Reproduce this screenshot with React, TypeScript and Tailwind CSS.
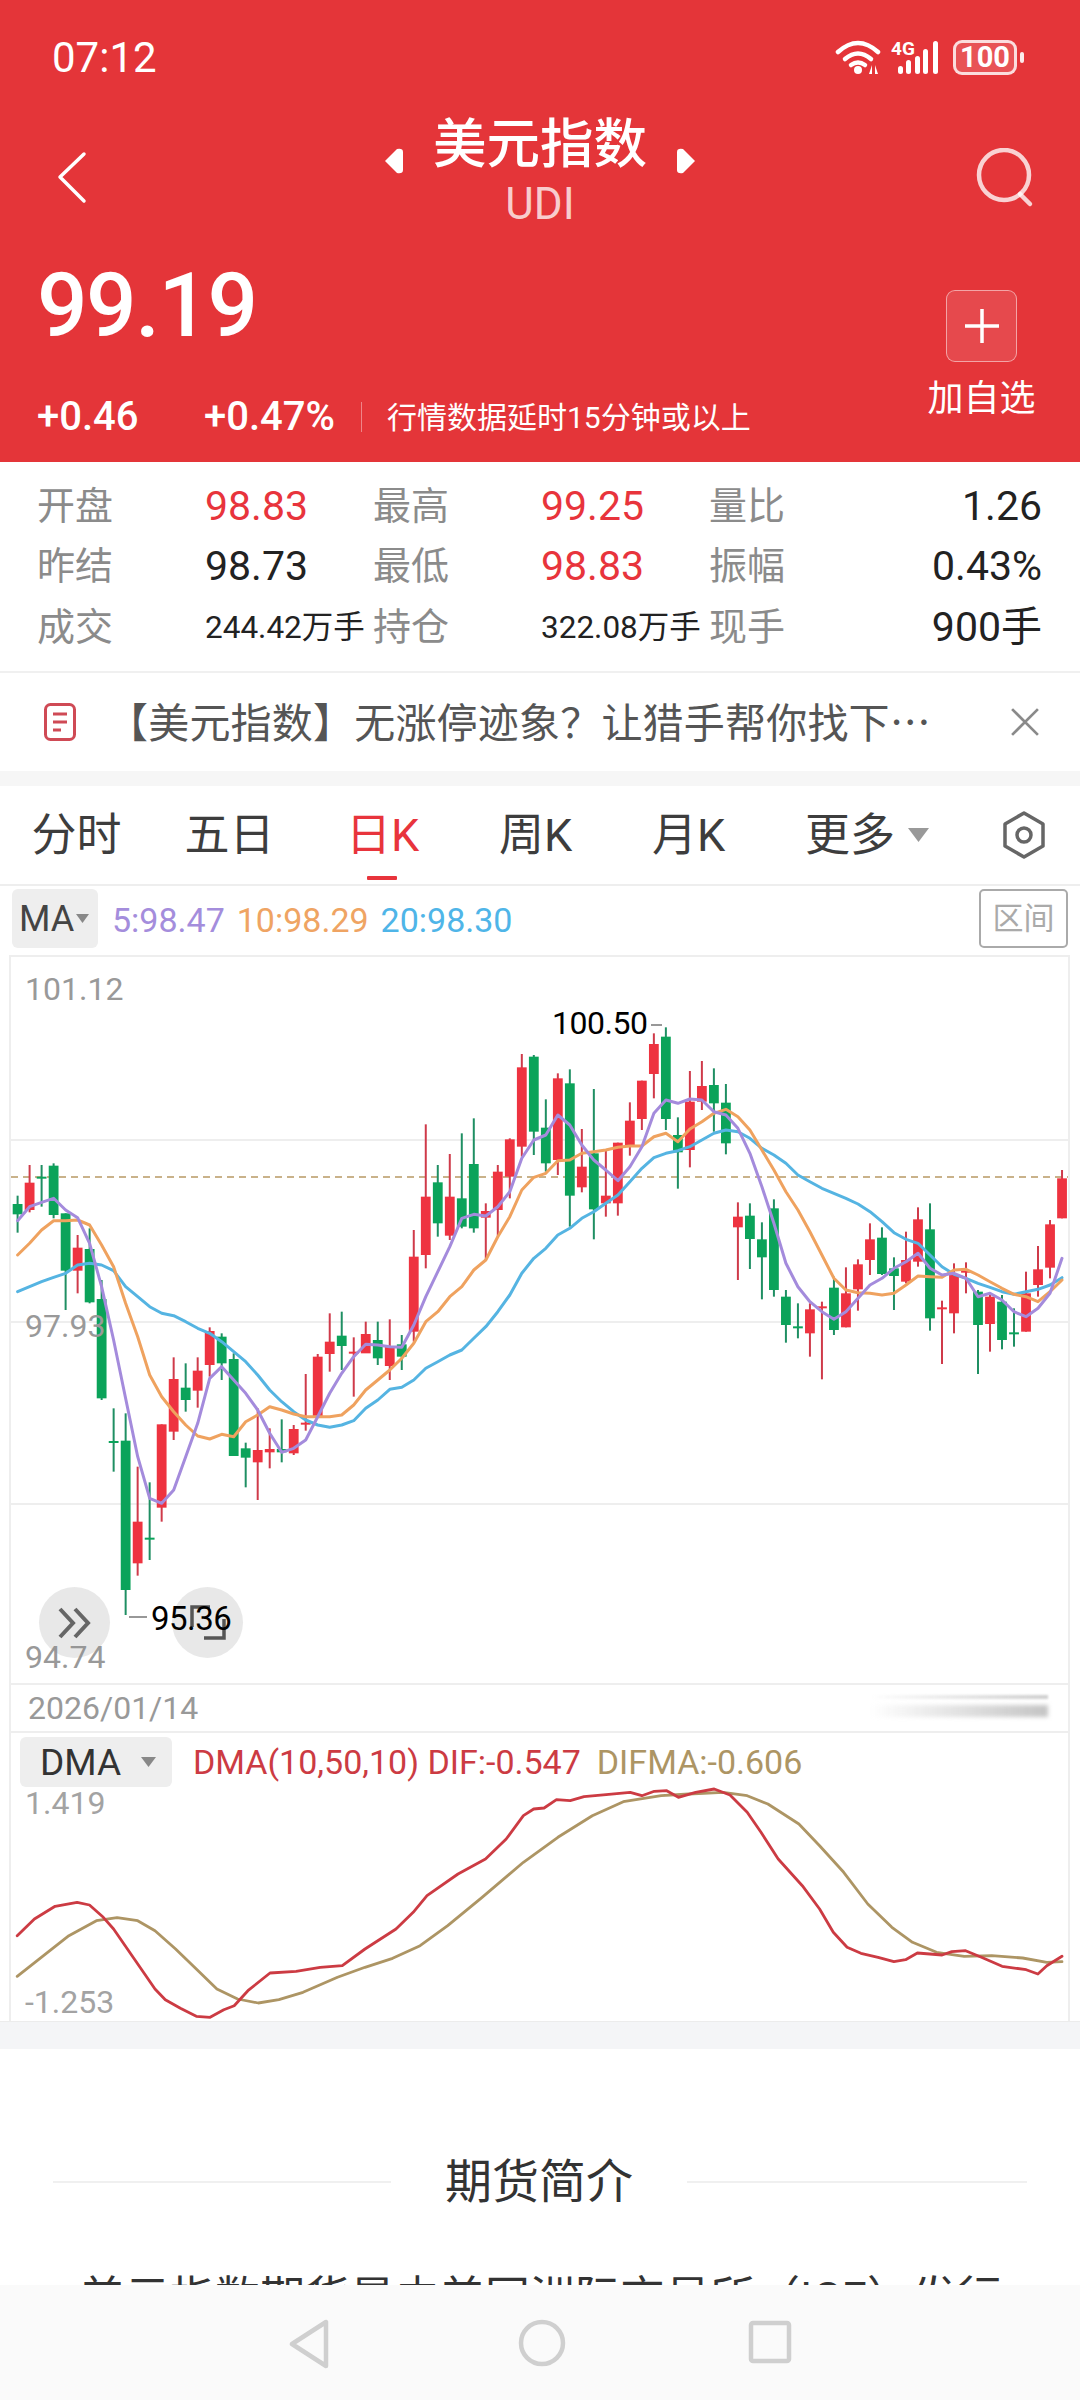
import React from "react";

type C = [string, number, number, number, number];
const candles: C[] = [
  ["g",737,848,762,793],["r",645,787,698,780],["g",645,770,680,684],["g",640,805,647,795],["g",790,1080,790,962],
  ["r",855,1030,893,962],["g",835,1060,897,1057],["g",990,1350,1047,1345],["g",1375,1565,1473,1479],["g",1390,1995,1472,1920],
  ["r",1550,1877,1715,1840],["g",1597,1830,1763,1769],["r",1423,1715,1423,1673],["r",1222,1470,1287,1445],["g",1240,1385,1313,1350],
  ["r",1222,1373,1262,1322],["r",1132,1280,1143,1245],["g",1150,1290,1160,1240],["g",1210,1347,1227,1518],["g",1478,1612,1495,1523],
  ["r",1375,1650,1500,1537],["r",1435,1555,1497,1507],["g",1408,1537,1497,1507],["r",1425,1515,1437,1510],["r",1272,1442,1418,1423],
  ["r",1212,1400,1220,1400],["r",1090,1265,1175,1212],["g",1085,1260,1157,1188],["r",1162,1340,1205,1211],["r",1115,1200,1152,1210],
  ["g",1115,1245,1170,1225],["r",1108,1290,1190,1248],["g",1155,1260,1183,1220],["r",840,1175,920,1145],["r",523,955,740,915],
  ["g",645,860,697,820],["r",612,870,740,857],["g",550,835,745,830],["g",505,848,642,835],["r",760,930,783,803],
  ["r",645,860,665,780],["r",565,745,568,680],["r",312,620,352,590],["g",315,615,320,545],
  ["g",448,665,533,640],["r",370,675,385,630],["g",358,830,400,737],["r",537,727,650,712],["g",417,868,610,778],
  ["r",600,800,737,760],["r",578,797,578,760],["r",457,617,512,590],["r",392,540,392,507],["r",250,445,282,372],
  ["g",232,540,260,507],["g",502,716,555,607],["r",363,652,455,600],["r",333,480,408,455],["g",355,545,405,460],
  ["g",402,613,458,580],["r",757,990,800,832],["g",760,957,797,867],["g",817,1048,868,922],["g",748,1040,775,1020],
  ["g",1020,1178,1040,1125],["g",1060,1165,1129,1131],["r",1060,1220,1078,1150],["r",1055,1288,1069,1075],["g",980,1155,1013,1140],
  ["r",952,1132,1030,1132],["r",928,1082,943,1018],["r",820,975,868,930],["g",832,975,863,972],["g",922,1080,955,978],
  ["r",845,1000,930,995],["r",772,950,808,935],["g",760,1142,838,1105],["r",1052,1242,1072,1078],["r",940,1150,975,1090],
  ["r",937,1030,962,968],["g",1020,1272,1025,1125],["r",1030,1205,1040,1122],["g",1035,1198,1055,1170],["g",1075,1190,1147,1153],
  ["r",965,1145,1030,1145],["r",888,1040,958,1005],["r",810,985,823,953],["r",660,805,685,805],
];
const ma5 = [812,770,757,745,780,803,880,1010,1170,1345,1520,1645,1660,1620,1520,1420,1285,1250,1290,1330,1380,1450,1507,1495,1470,1400,1330,1270,1220,1183,1185,1190,1192,1125,1040,965,890,805,793,798,770,725,625,570,555,495,525,585,630,660,692,650,590,490,450,460,447,450,485,495,535,610,710,820,940,1010,1055,1085,1108,1085,1045,1005,985,955,935,910,955,975,970,985,1040,1030,1050,1085,1100,1075,1030,925];
const ma10 = [915,880,840,812,812,810,825,885,950,1060,1160,1275,1340,1385,1425,1458,1467,1453,1460,1415,1395,1370,1380,1392,1400,1400,1400,1395,1365,1320,1290,1260,1225,1180,1115,1085,1040,1010,960,930,860,800,720,682,670,632,630,610,605,600,592,588,588,560,550,575,537,515,490,478,500,540,600,660,725,780,845,915,985,1020,1028,1030,1035,1030,1005,978,980,982,960,958,975,995,1015,1033,1040,1055,1025,990];
const ma20 = [1025,1010,995,982,970,945,940,945,962,1010,1040,1070,1090,1097,1115,1135,1150,1175,1205,1235,1275,1320,1355,1385,1410,1425,1432,1425,1412,1375,1350,1318,1312,1290,1255,1235,1215,1200,1165,1130,1085,1035,970,925,895,855,835,805,785,760,735,695,655,623,610,602,590,570,550,540,545,565,595,615,640,675,695,715,730,745,762,785,815,848,868,880,915,950,973,985,1000,1012,1025,1033,1025,1018,1005,983];
const dif = [25,650,50,600,80,562,112,550,130,558,150,595,165,630,185,690,205,750,225,810,240,842,262,868,285,892,305,895,325,872,340,860,360,815,392,762,430,757,465,745,497,740,530,690,575,630,600,580,620,530,665,465,705,420,735,360,760,290,775,270,790,267,808,242,828,245,848,233,880,227,915,220,932,230,950,217,968,215,985,235,1010,220,1037,210,1060,228,1085,280,1105,340,1130,420,1165,500,1190,570,1210,640,1230,685,1250,703,1275,715,1298,728,1315,722,1332,702,1368,708,1382,698,1402,695,1425,715,1455,742,1490,752,1507,765,1520,740,1542,712];
const difma = [25,772,60,715,100,650,140,605,170,596,200,605,225,635,255,690,285,750,315,810,345,840,375,852,405,842,440,820,490,775,530,745,570,718,610,680,650,620,700,535,760,430,810,355,860,290,905,248,960,230,1000,225,1050,220,1085,230,1115,255,1160,315,1190,380,1225,460,1260,555,1295,625,1325,670,1360,700,1400,712,1440,710,1485,717,1520,730,1542,728];

const cx = (i: number) => 17.6 + 12.005 * i;
const uy = (u: number) => 950 + u / 3;
const linePts = (a: number[]) => a.map((u, i) => `${cx(i).toFixed(1)},${uy(u).toFixed(1)}`).join(" ");
const dmaPts = (a: number[]) => {
  const out: string[] = [];
  for (let i = 0; i < a.length; i += 2) out.push(`${(a[i] / 1.452).toFixed(1)},${(1720 + a[i + 1] / 3).toFixed(1)}`);
  return out.join(" ");
};

function StatusIcons() {
  return (
    <div className="flex items-center">
      <svg width="48" height="36" viewBox="832 38 48 36" className="block">
        <g fill="none" stroke="#fff" strokeWidth="4.5" strokeLinecap="round">
          <path d="M835 51 Q855 33 875 51" />
          <path d="M842 58 Q855 47 868 58" />
          <path d="M848 64 Q855 59 862 64" />
        </g>
        <circle cx="855" cy="69" r="4" fill="#fff" />
        <path d="M869 64 v9 h-3 z M872 64 v9 h3 z" fill="#fff" />
      </svg>
      <div className="relative ml-[8px] w-[52px] h-[36px]">
        <span className="absolute left-0 top-[0px] text-[19px] leading-[19px] font-bold text-white">4G</span>
        <svg width="52" height="36" viewBox="0 0 52 36" className="block">
          <g fill="#fff">
            <rect x="7" y="27" width="5" height="8" rx="2.5" />
            <rect x="15" y="21" width="5" height="14" rx="2.5" />
            <rect x="24" y="17" width="5" height="18" rx="2.5" />
            <rect x="32" y="10" width="5" height="25" rx="2.5" />
            <rect x="42" y="2" width="5" height="33" rx="2.5" />
          </g>
        </svg>
      </div>
      <div className="ml-[10px] w-[64px] h-[35px] rounded-[9px] border-[3px] border-white/80 bg-white/15 flex items-center justify-center text-white font-bold text-[29px] leading-none">100</div>
      <div className="ml-[3px] w-[4px] h-[11px] rounded-full bg-white/90" />
    </div>
  );
}

function Stat({ t, c, small }: { t: string; c: string; small?: boolean }) {
  return <div className={`${small ? "text-[31.5px]" : "text-[41px]"} whitespace-nowrap ${c}`}>{t}</div>;
}

export default function App() {
  const labelC = "text-[38px] text-[#8b8b8b]";
  return (
    <div className="relative w-[1080px] h-[2400px] overflow-hidden bg-white font-['Roboto','Noto_Sans_CJK_SC',sans-serif]">
      <header className="h-[462px] bg-[#e43539] text-white">
        <div className="h-[114px] flex items-center justify-between pl-[52px] pr-[56px]">
          <span className="mt-[2px] text-[42px] leading-none">07:12</span>
          <StatusIcons />
        </div>
        <div className="h-[126px] flex items-start justify-between">
          <svg width="36" height="56" viewBox="52 150 36 56" className="mt-[36px] ml-[52px] mr-[18px]">
            <polyline points="84,154 60,177 84,201" fill="none" stroke="#fff" strokeWidth="3.5" strokeLinecap="round" strokeLinejoin="round" />
          </svg>
          <div className="flex items-start">
            <svg width="18" height="26" viewBox="0 0 18 26" className="mt-[34px]"><path d="M0 13 L12 1 Q18 0 18 4 V22 Q18 26 12 25 Z" fill="#fff" /></svg>
            <div className="mx-[30px] mt-[3px] flex flex-col items-center">
              <div className="text-[53.5px] leading-[56px] font-medium">美元指数</div>
              <div className="mt-[8px] text-[44px] leading-[46px] text-white/75">UDI</div>
            </div>
            <svg width="18" height="26" viewBox="0 0 18 26" className="mt-[34px]"><path d="M18 13 L6 1 Q0 0 0 4 V22 Q0 26 6 25 Z" fill="#fff" /></svg>
          </div>
          <svg width="60" height="60" viewBox="974 148 60 60" className="mt-[34px] mr-[46px]">
            <circle cx="1004" cy="175" r="25" fill="none" stroke="#fff" strokeOpacity="0.78" strokeWidth="4.5" />
            <path d="M1020 194 L1030 204" stroke="#fff" strokeOpacity="0.78" strokeWidth="4.5" strokeLinecap="round" />
          </svg>
        </div>
        <div className="flex justify-between">
          <div className="pl-[37px]">
            <div className="mt-[22px] text-[89px] leading-[88px] font-medium tracking-[-1.5px]">99.19</div>
            <div className="mt-[47px] h-[40px] flex items-center">
              <span className="w-[167px] text-[40px] font-medium">+0.46</span>
              <span className="w-[157px] text-[40px] font-medium">+0.47%</span>
              <span className="w-[1px] h-[30px] bg-white/40 mr-[25px]" />
              <span className="text-[30px]">行情数据延时15分钟或以上</span>
            </div>
          </div>
          <div className="w-[107px] mr-[45px] flex flex-col items-center">
            <div className="mt-[50px] w-[71px] h-[72px] rounded-[9px] border border-white/50 bg-white/10 flex items-center justify-center">
              <svg width="34" height="36" viewBox="0 0 34 36">
                <path d="M17 1 V35 M0 18 H34" stroke="#fff" strokeWidth="3.5" />
              </svg>
            </div>
            <div className="mt-[19px] text-[36px] leading-[36px] whitespace-nowrap">加自选</div>
          </div>
        </div>
      </header>

      <section className="h-[211px] pt-[14px] pl-[37px] pr-[38px] grid grid-cols-[168px_168px_168px_168px_168px_165px] auto-rows-[60.5px] items-center border-b-2 border-[#f0f0f0]">
        <div className={labelC}>开盘</div><Stat t="98.83" c="text-[#e8343c]" /><div className={labelC}>最高</div><Stat t="99.25" c="text-[#e8343c]" /><div className={labelC}>量比</div><div className="text-right"><Stat t="1.26" c="text-[#222]" /></div>
        <div className={labelC}>昨结</div><Stat t="98.73" c="text-[#222]" /><div className={labelC}>最低</div><Stat t="98.83" c="text-[#e8343c]" /><div className={labelC}>振幅</div><div className="text-right"><Stat t="0.43%" c="text-[#222]" /></div>
        <div className={labelC}>成交</div><Stat t="244.42万手" c="text-[#222]" small /><div className={labelC}>持仓</div><Stat t="322.08万手" c="text-[#222]" small /><div className={labelC}>现手</div><div className="text-right"><Stat t="900手" c="text-[#222]" /></div>
      </section>

      <section className="h-[98px] flex items-center pl-[44px]">
        <svg width="32" height="38" viewBox="0 0 32 38">
          <rect x="1.5" y="1.5" width="29" height="35" rx="5" fill="none" stroke="#cf4a55" strokeWidth="3" />
          <path d="M9 11 H23 M9 19 H23 M9 27 H17" stroke="#cf4a55" strokeWidth="3" />
        </svg>
        <div className="ml-[31px] w-[828px] text-[41px] leading-none text-[#555] whitespace-nowrap tracking-[0.2px]">【美元指数】无涨停迹象？让猎手帮你找下<span className="font-['Noto_Sans_CJK_SC']">…</span></div>
        <svg width="28" height="28" viewBox="0 0 26 26" className="ml-[76px]">
          <path d="M1 1 L25 25 M25 1 L1 25" stroke="#8a8a8a" strokeWidth="2.5" />
        </svg>
      </section>
      <div className="h-[15px] bg-[#f6f6f6]" />

      <nav className="h-[100px] flex items-center text-[45px] leading-none text-[#3d3d3d] border-b-2 border-[#eee]">
        <div className="w-[153px] text-center">分时</div>
        <div className="w-[153px] text-center">五日</div>
        <div className="relative w-[153px] h-full flex items-center justify-center text-[#e8343c]">
          日K
          <span className="absolute bottom-[4px] left-[61px] w-[30px] h-[4px] rounded-[1px] bg-[#e8343c]" />
        </div>
        <div className="w-[153px] text-center">周K</div>
        <div className="w-[153px] text-center">月K</div>
        <div className="w-[153px] pl-[40px] flex items-center whitespace-nowrap">
          更多
          <svg width="21" height="14" viewBox="0 0 21 14" className="ml-[13px] shrink-0"><path d="M0 0 H21 L10.5 14 Z" fill="#999" /></svg>
        </div>
        <svg width="44" height="48" viewBox="0 0 44 48" className="ml-[84px]">
          <path d="M22 2 L41 13 V35 L22 46 L3 35 V13 Z" fill="none" stroke="#666" strokeWidth="3.5" strokeLinejoin="round" />
          <circle cx="22" cy="24" r="7" fill="none" stroke="#666" strokeWidth="3.5" />
        </svg>
      </nav>

      <div className="h-[69px] flex items-start pt-[3px] pl-[12px]">
        <div className="w-[86px] h-[59px] rounded-[6px] bg-[#eeeeee] flex items-center pl-[7px] text-[36px] leading-none text-[#444]">
          MA
          <svg width="13" height="9" viewBox="0 0 13 9" className="ml-[2px]"><path d="M0 0 H13 L6.5 9 Z" fill="#888" /></svg>
        </div>
        <div className="h-[59px] ml-[14px] pt-[2px] flex items-center text-[34px] leading-none gap-[12px]">
          <span className="text-[#a48ddc]">5:98.47</span>
          <span className="text-[#efa463]">10:98.29</span>
          <span className="text-[#4fb5e8]">20:98.30</span>
        </div>
        <div className="ml-auto mr-[12px] w-[89px] h-[59px] rounded-[5px] border-2 border-[#aaa] flex items-center justify-center text-[31px] leading-none text-[#aaa]">区间</div>
      </div>

      <section className="ml-[9px] w-[1061px] border-x-2 border-t-2 border-[#eeeeee]">
        <div className="relative h-[728px] border-b-2 border-[#eeeeee]">
          <svg width="1057" height="726" viewBox="11 957 1057 726" className="block">
            <g stroke="#eeeeee" strokeWidth="2">
              <path d="M11 1140 H1068 M11 1322 H1068 M11 1504 H1068" />
            </g>
            <path d="M11 1177 H1068" stroke="#c9b28a" strokeWidth="2" strokeDasharray="7 5" />
            {candles.map((c, i) => {
              const col = c[0] === "r" ? "#ee3340" : "#0ba35a";
              const wick = c[0] === "r" ? "#cf3a4a" : "#1f8f63";
              const x = cx(i);
              const top = uy(c[3]);
              const h = Math.max(2, uy(c[4]) - top);
              return (
                <g key={i}>
                  <path d={`M${x} ${uy(c[1])} V${uy(c[2])}`} stroke={wick} strokeWidth="2" />
                  <rect x={x - 4.9} y={top} width="9.8" height={h} fill={col} />
                </g>
              );
            })}
            <g fill="none" strokeWidth="3" strokeLinejoin="round" strokeLinecap="round">
              <polyline points={linePts(ma20)} stroke="#55b4e2" />
              <polyline points={linePts(ma10)} stroke="#efa25f" />
              <polyline points={linePts(ma5)} stroke="#a48bdc" />
            </g>
            <path d="M651 1025 H662 M129 1617 H147" stroke="#777" strokeWidth="1.5" />
          </svg>
          <span className="absolute left-[14px] top-[16px] text-[32px] leading-[32px] text-[#999]">101.12</span>
          <span className="absolute left-[14px] top-[353px] text-[32px] leading-[32px] text-[#999]">97.93</span>
          <span className="absolute left-[14px] top-[684px] text-[32px] leading-[32px] text-[#999]">94.74</span>
          <span className="absolute left-[541px] top-[50px] text-[32px] leading-[32px] text-black tracking-[-0.5px]">100.50</span>
          <div className="absolute left-[28px] top-[630px] w-[71px] h-[71px] rounded-full bg-[#8c8c8c]/20 flex items-center justify-center">
            <svg width="34" height="32" viewBox="0 0 34 32">
              <path d="M2 2 L15 16 L2 30 M17 2 L30 16 L17 30" fill="none" stroke="#666" strokeWidth="4" />
            </svg>
          </div>
          <div className="absolute left-[161px] top-[630px] w-[71px] h-[71px] rounded-full bg-[#8c8c8c]/20 flex items-center justify-center">
            <svg width="36" height="36" viewBox="0 0 36 36">
              <path d="M2 22 V2 H20 M34 14 V33 H14" fill="none" stroke="#555" strokeWidth="3.5" />
            </svg>
          </div>
          <span className="absolute left-[140px] top-[645px] text-[33px] leading-[33px] text-black tracking-[-0.5px]">95.36</span>
        </div>

        <div className="relative h-[48px] border-b-2 border-[#eeeeee] flex items-center pl-[17px]">
          <span className="text-[32px] leading-none text-[#999]">2026/01/14</span>
          <div className="absolute left-[859px] top-[10px] w-[178px] h-[4px] blur-[1px] bg-gradient-to-r from-transparent to-[#cfcfcf]" />
          <div className="absolute left-[859px] top-[20px] w-[178px] h-[12px] blur-[2px] bg-gradient-to-r from-transparent to-[#c4c4c4]" />
        </div>

        <div className="relative h-[288px]">
          <svg width="1057" height="288" viewBox="11 1734 1057 288" className="block">
            <g fill="none" strokeWidth="2.8" strokeLinejoin="round" strokeLinecap="round">
              <polyline points={dmaPts(difma)} stroke="#ad9564" />
              <polyline points={dmaPts(dif)} stroke="#cc3b43" />
            </g>
          </svg>
          <div className="absolute left-[9px] top-[4px] w-[152px] h-[50px] rounded-[6px] bg-[#eeeeee] flex items-center pl-[20px] text-[37px] leading-none text-[#333]">
            DMA
            <svg width="15" height="10" viewBox="0 0 15 10" className="ml-[20px]"><path d="M0 0 H15 L7.5 10 Z" fill="#888" /></svg>
          </div>
          <div className="absolute left-[182px] top-[4px] h-[50px] flex items-center text-[34px] leading-none whitespace-nowrap">
            <span className="text-[#cc3b43]">DMA(10,50,10) DIF:-0.547</span>
            <span className="ml-[16px] text-[#ad9564]">DIFMA:-0.606</span>
          </div>
          <span className="absolute left-[14px] top-[54px] text-[32px] leading-[32px] text-[#a3a3a3]">1.419</span>
          <span className="absolute left-[14px] top-[253px] text-[32px] leading-[32px] text-[#a3a3a3]">-1.253</span>
        </div>
      </section>
      <div className="h-[28px] bg-[#f4f5f7] border-t border-[#ececec]" />

      <section className="relative">
        <div className="pt-[107px] px-[53px] flex items-center">
          <div className="h-[2px] w-[338px] bg-[#f0f0f0]" />
          <div className="flex-1 text-center text-[47px] leading-[52px] text-[#333]">期货简介</div>
          <div className="h-[2px] w-[340px] bg-[#f0f0f0]" />
        </div>
        <p className="mt-[58px] px-[80px] text-[45px] leading-[66px] text-[#333] whitespace-nowrap">美元指数期货是由美国洲际交易所（ICE）发行</p>
      </section>

      <div className="absolute left-0 right-0 bottom-0 h-[115px] bg-[#fafafa] flex items-start justify-center pt-[34px]">
        <svg width="44" height="50" viewBox="0 0 44 50">
          <path d="M38 3 V47 L4 25 Z" fill="none" stroke="#cfcfcf" strokeWidth="4.5" strokeLinejoin="round" />
        </svg>
        <svg width="48" height="48" viewBox="0 0 48 48" className="ml-[186px]">
          <circle cx="24" cy="24" r="21" fill="none" stroke="#cfcfcf" strokeWidth="4.5" />
        </svg>
        <svg width="44" height="44" viewBox="0 0 44 44" className="ml-[182px] mt-[1px]">
          <rect x="3" y="3" width="38" height="38" rx="2" fill="none" stroke="#cfcfcf" strokeWidth="4.5" />
        </svg>
      </div>
    </div>
  );
}
